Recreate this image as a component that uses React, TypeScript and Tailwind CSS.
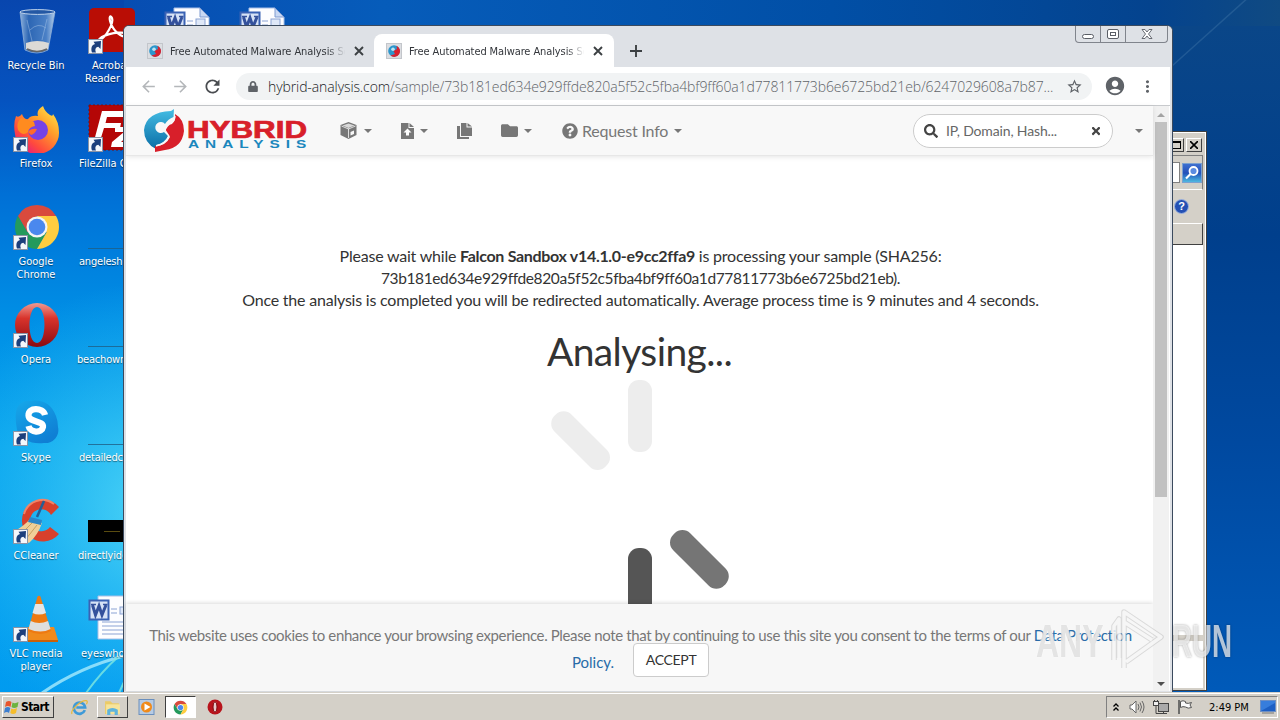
import React from 'react';
import { FaFolder, FaQuestionCircle, FaSearch, FaTimes, FaLock } from 'react-icons/fa';
import { MdArrowBack, MdArrowForward, MdRefresh, MdStarBorder, MdAccountCircle, MdMoreVert } from 'react-icons/md';

type IconProps = { className?: string };

function ShortcutArrow() {
  return (
    <svg viewBox="0 0 15 15" className="absolute bottom-0 left-0 h-[15px] w-[15px]">
      <rect x="0.5" y="0.5" width="14" height="14" fill="#f4f7fb" stroke="#8a94a6" />
      <path d="M4 13.500C2.500 9 4 5.800 7 5L5.500 2.800L13 2L12.500 10L10.300 7.800C8 8.300 6.500 10 8 13.500Z" fill="#1c3f7c" />
    </svg>
  );
}

function RecycleIcon() {
  return (
    <svg viewBox="0 0 48 48" className="h-12 w-12">
      <defs>
        <linearGradient id="bin" x1="0" x2="1">
          <stop offset="0" stopColor="#8fb2dc" />
          <stop offset="0.25" stopColor="#2c66b4" />
          <stop offset="0.75" stopColor="#4a80c6" />
          <stop offset="1" stopColor="#b4cdea" />
        </linearGradient>
      </defs>
      <path d="M7 6L12 44Q24 50 35 44L42 6Z" fill="url(#bin)" stroke="#8fb0d8" strokeWidth=".8" />
      <path d="M13 37Q24 33 36 37L35 43Q24 48 13 43Z" fill="#dcdad6" />
      <path d="M14 43Q24 48 34 43" stroke="#666" fill="none" strokeWidth="1.500" />
      <ellipse cx="24.500" cy="6" rx="17.500" ry="2.400" fill="#2458a4" stroke="#c0d4ec" />
      <path d="M14 14L19 35M34 13L29 34M17 24Q25 16 33 22" stroke="#a4c2e6" fill="none" opacity=".5" />
    </svg>
  );
}

function FirefoxIcon() {
  return (
    <svg viewBox="0 0 48 48" className="h-12 w-12">
      <defs>
        <linearGradient id="fx" x1="1" y1="0" x2="0.2" y2="1">
          <stop offset="0" stopColor="#fff44f" />
          <stop offset="0.4" stopColor="#ffa02a" />
          <stop offset="0.75" stopColor="#ff4a3d" />
          <stop offset="1" stopColor="#e31587" />
        </linearGradient>
      </defs>
      <path d="M3 11Q6 13 9 9Q11 15 15 14Q18 10 25 11Q23 5 30 1Q32 7 37 10Q40 12 40 9Q46 17 46 27A22 21 0 0 1 2 29Q0 19 3 11Z" fill="url(#fx)" />
      <circle cx="25" cy="25" r="10" fill="#7542e5" />
      <path d="M8 13L21 17L22 21Q16 22 15 27Q10 32 5 25Q3 18 8 13Z" fill="#ff8b1f" />
      <path d="M15 27Q18 23 24 24Q22 29 18 30Z" fill="#ff6a2b" />
    </svg>
  );
}

function ChromeIcon({ className }: IconProps) {
  return (
    <svg viewBox="0 0 48 48" className={className}>
      <path d="M24 2A22 22 0 0 1 43.050 13H24L14.500 29.500L4.950 13A22 22 0 0 1 24 2Z" fill="#d94a3d" />
      <path d="M4.950 13A22 22 0 0 0 24 46L33.500 29.500H14.500Z" fill="#249a5c" />
      <path d="M43.050 13A22 22 0 0 1 24 46L33.500 29.500L24 13Z" fill="#ffcd40" />
      <circle cx="24" cy="24" r="10.500" fill="#f4f4f4" />
      <circle cx="24" cy="24" r="8.300" fill="#4a88ee" />
    </svg>
  );
}

function OperaIcon({ className }: IconProps) {
  return (
    <svg viewBox="0 0 48 48" className={className}>
      <defs>
        <linearGradient id="op" x1="0" y1="0" x2="0" y2="1">
          <stop offset="0" stopColor="#ee9a92" />
          <stop offset="0.35" stopColor="#d8332b" />
          <stop offset="1" stopColor="#8c0a10" />
        </linearGradient>
      </defs>
      <path fillRule="evenodd" d="M24 2A22 22 0 0 1 24 46A22 22 0 0 1 24 2ZM24 6C14 6 14 42 24 42C34 42 34 6 24 6Z" fill="url(#op)" />
    </svg>
  );
}

function SkypeIcon() {
  return (
    <svg viewBox="0 0 48 48" className="h-12 w-12">
      <defs>
        <linearGradient id="sk" x1="0" y1="0" x2="0.6" y2="1">
          <stop offset="0" stopColor="#16a8ea" />
          <stop offset="1" stopColor="#0f7fd4" />
        </linearGradient>
      </defs>
      <path d="M3 14A12 12 0 0 1 17 2Q36 -1 43 17Q45 22 45 28A13 13 0 0 1 31 44Q11 46 4 31Q2 20 3 14Z" fill="url(#sk)" />
      <path d="M32 16C30 8 15 8 15.500 16.500C16 24 31 21 30 28C29 34.500 17 34 15.500 27" fill="none" stroke="#fff" strokeWidth="6.200" />
    </svg>
  );
}

function CCleanerIcon() {
  return (
    <svg viewBox="0 0 48 48" className="h-12 w-12">
      <path d="M46 10A21 21 0 1 0 46 37L37 30A11 11 0 1 1 38 18Z" fill="#d8402c" />
      <path d="M41 7A19 19 0 0 0 11 17" fill="none" stroke="#f08468" strokeWidth="2" />
      <path d="M2 34Q12 28 17 22L29 26Q25 38 16 46Q8 42 2 34Z" fill="#f0cf98" />
      <path d="M7 38L19 26M13 42L24 28" stroke="#caa05e" />
      <path d="M17 20L29 23L28 28L15 25Z" fill="#2c86c8" />
      <path d="M24 20L31 4" stroke="#245f96" strokeWidth="2.500" />
    </svg>
  );
}

function VlcIcon() {
  return (
    <svg viewBox="0 0 48 48" className="h-12 w-12">
      <path d="M11 32H39L43 45V47H10Z" fill="#f08a1c" />
      <path d="M10 45H43V47H10Z" fill="#c96008" />
      <path d="M22.500 1.500Q24 0 25.500 1.500L36 36Q26 42 13 36Z" fill="#ee7a12" />
      <path d="M20.200 9H28.200L31 18Q24 21 17.500 18Z" fill="#e6e6e6" />
      <path d="M15.700 26Q24 30 33 26L35.500 34Q26 39 13.500 34Z" fill="#dedede" />
    </svg>
  );
}

function AcrobatIcon() {
  return (
    <svg viewBox="0 0 48 48" className="h-12 w-12">
      <rect x="1" y="3" width="46" height="44" rx="5" fill="#b90d05" />
      <path d="M12 35C18 32 26 18 24 13C22 9 20 13 24 21C28 29 37 34 39 30C40 26 23 27 14 32C10 35 9 37 12 35Z" fill="none" stroke="#fff" strokeWidth="2.200" />
    </svg>
  );
}

function FileZillaIcon() {
  return (
    <svg viewBox="0 0 48 48" className="h-12 w-12">
      <rect x="1" y="2" width="46" height="45" fill="#b40606" stroke="#7a1010" strokeDasharray="2 2" />
      <path d="M14 8H38L36 14H19L17.500 20H33L32 25H16L12 38H6ZM27 24H46L44 29L33 39H46V44H23L24 39L36 29H27Z" fill="#fff" />
    </svg>
  );
}

function WordIcon() {
  return (
    <svg viewBox="0 0 48 48" className="h-12 w-12">
      <path d="M10 3H36L45 12V46H10Z" fill="#fdfdff" stroke="#a9bfe6" />
      <path d="M36 3V12H45Z" fill="#c9d8f3" stroke="#7f9bd1" />
      <path d="M23 16H29M23 20H29M14 29H41M14 33H41M14 37H41M14 41H41" stroke="#8ba3d4" />
      <rect x="32" y="14" width="9" height="7" fill="#dfe8f8" stroke="#8ba3d4" />
      <rect x="1.500" y="7.500" width="19" height="19" fill="#d6e2f6" stroke="#3a62b4" strokeWidth="2" />
      <path d="M4.500 12L7.500 22L11 13L14 22L18 12" fill="none" stroke="#34519c" strokeWidth="3" />
      <path d="M3 11.500H8M15 11.500H19.500" stroke="#34519c" strokeWidth="1.500" />
    </svg>
  );
}

function ThumbLine() {
  return <div className="pt-[47px]"><div className="h-px w-12 bg-[#1f5f86]/80" /></div>;
}

function BlackThumb() {
  return (
    <div className="flex h-[22px] w-12 items-center justify-center bg-black">
      <div className="h-px w-4 bg-[#5a4c10]" />
    </div>
  );
}

function Column1Item({ icon, label, shortcut = true }: { icon: React.ReactNode; label: string[]; shortcut?: boolean }) {
  return (
    <div className="flex h-[98px] flex-col items-center">
      <div className="relative h-[49px] w-12">
        <div className={shortcut ? 'pl-px pt-[2px]' : 'pt-px pl-px'}>{icon}</div>
        {shortcut && <div className="absolute bottom-0 left-[1px] h-[15px] w-[15px]"><ShortcutArrow /></div>}
      </div>
      <div className="mt-[5px] text-center">
        {label.map((l) => <div key={l}>{l}</div>)}
      </div>
    </div>
  );
}

function Column2Item({ icon, label, shortcut = false }: { icon: React.ReactNode; label: React.ReactNode; shortcut?: boolean }) {
  return (
    <div className="h-[98px] w-[60px]">
      <div className="relative ml-[12px] h-[49px] w-12">
        {icon}
        {shortcut && <ShortcutArrow />}
      </div>
      <div className="mt-[5px] whitespace-nowrap">{label}</div>
    </div>
  );
}

function Wallpaper() {
  return (
    <svg viewBox="0 0 1280 720" className="absolute inset-0 h-[720px] w-[1280px]">
      <defs>
        <linearGradient id="wTop" x1="0" x2="1">
          <stop offset="0" stopColor="#0846ae" />
          <stop offset="0.3" stopColor="#065cba" />
          <stop offset="0.65" stopColor="#014fa6" />
          <stop offset="0.9" stopColor="#04438e" />
          <stop offset="1" stopColor="#104a82" />
        </linearGradient>
        <linearGradient id="wLeft" x1="0" x2="0" y1="0" y2="1">
          <stop offset="0" stopColor="#0846ae" />
          <stop offset="0.14" stopColor="#0553c0" />
          <stop offset="0.27" stopColor="#0070d6" />
          <stop offset="0.45" stopColor="#0090e6" />
          <stop offset="0.62" stopColor="#06a4ee" />
          <stop offset="1" stopColor="#009af0" />
        </linearGradient>
        <radialGradient id="wGlow" gradientUnits="userSpaceOnUse" cx="160" cy="510" r="230">
          <stop offset="0" stopColor="#58dcf8" stopOpacity=".9" />
          <stop offset="1" stopColor="#30c0f4" stopOpacity="0" />
        </radialGradient>
        <linearGradient id="wRight" x1="0" x2="0" y1="0" y2="1">
          <stop offset="0" stopColor="#0a4688" />
          <stop offset="0.3" stopColor="#003f8c" />
          <stop offset="0.6" stopColor="#0049a0" />
          <stop offset="1" stopColor="#005cbc" />
        </linearGradient>
      </defs>
      <rect width="1280" height="720" fill="url(#wTop)" />
      <rect width="124" height="720" fill="url(#wLeft)" />
      <rect width="124" height="720" fill="url(#wGlow)" />
      <rect x="1165" y="26" width="115" height="694" fill="url(#wRight)" />
      <path d="M1250 -4L1172 66" stroke="#4b7fae" strokeWidth="1.500" opacity=".35" />
      <path d="M42 693Q80 667 124 656" stroke="#a8ebfc" strokeWidth="3" fill="none" opacity=".8" />
      <path d="M86 693Q102 671 118 657M119 693L124 682" stroke="#7fe9e0" strokeWidth="2" fill="none" opacity=".8" />
    </svg>
  );
}

function BackWindow() {
  return (
    <div className="absolute left-[1099px] top-[131px] flex h-[560px] w-[108px] flex-col border border-[#404040] bg-[#d4d0c8] pb-[2px] pr-[3px] shadow-[inset_-1px_1px_0_#fff]">
      <div className="flex h-[23px] items-center justify-end gap-[2px] pr-[1px] pt-[3px]">
        <div className="flex h-[14px] w-4 items-center justify-center border border-t-white border-r-[#404040] border-b-[#404040] border-l-white">
          <div className="h-2 w-[9px] border border-t-2 border-black" />
        </div>
        <div className="flex h-[14px] w-4 items-center justify-center border border-t-white border-r-[#404040] border-b-[#404040] border-l-white">
          <svg viewBox="0 0 8 8" className="h-2 w-2"><path d="M0 0L8 8M8 0L0 8" stroke="#000" strokeWidth="1.600" /></svg>
        </div>
      </div>
      <div className="flex h-[35px] items-center justify-end border-y border-r border-t-[#808080] border-r-[#808080] border-b-white">
        <div className="h-[21px] w-20 border border-[#808080] bg-white" />
        <div className="ml-[2px] flex h-[20px] w-[20px] items-center justify-center border border-[#7ba0d0] bg-linear-to-b from-[#3e6fd0] via-[#2450b8] to-[#50b8e0]">
          <svg viewBox="0 0 16 16" className="h-4 w-4"><circle cx="9.500" cy="6" r="4" fill="#5b8be0" stroke="#fff" strokeWidth="1.800" /><path d="M6.500 9L2 13.500" stroke="#fff" strokeWidth="2.200" /></svg>
        </div>
      </div>
      <div className="flex h-[33px] items-center justify-end pr-[14px]">
        <div className="flex h-[15px] w-[15px] items-center justify-center rounded-full border border-[#9fb4de] bg-[#2450b4] font-['Liberation_Sans'] text-[11px] font-bold leading-none text-white">?</div>
      </div>
      <div className="h-[22px] border-b border-r border-t border-t-white border-r-[#404040] border-b-[#404040]" />
      <div className="h-[390px] bg-white" />
      <div className="h-[6px] bg-[#d4d0c8]" />
      <div className="grow bg-white" />
    </div>
  );
}

function Favicon() {
  return (
    <svg viewBox="0 0 16 16" className="h-4 w-4 shrink-0">
      <rect x="0.500" y="0.500" width="15" height="15" fill="#dcdee2" stroke="#c3c6cb" />
      <circle cx="8" cy="8" r="5.800" fill="#2b96cc" />
      <path d="M10.500 2.800A5.800 5.800 0 1 1 4.500 12.600L9 11L7.500 8L11 6Z" fill="#d9202e" />
      <circle cx="7" cy="6.300" r="1.800" fill="#bfe3f2" />
    </svg>
  );
}

function TabTitle() {
  return (
    <div className="ml-[7px] w-[177px] overflow-hidden whitespace-nowrap pt-px text-[11px] tracking-[-0.1px] text-[#33363b] [mask-image:linear-gradient(to_right,#000_89%,transparent_99%)]">
      Free Automated Malware Analysis Service
    </div>
  );
}

function CloseTab() {
  return <svg viewBox="0 0 14 14" className="ml-[5px] h-[14px] w-[14px]"><path d="M3 3L11 11M11 3L3 11" stroke="#3c4043" strokeWidth="1.900" /></svg>;
}

function TabStrip() {
  return (
    <div className="flex h-[41px] bg-[#dee1e6] pl-[3px]">
      <div className="mt-[8px] flex h-[33px] w-[247px] items-center pl-[20px]">
        <Favicon />
        <TabTitle />
        <CloseTab />
      </div>
      <div className="mt-[8px] flex h-[33px] w-[240px] items-center rounded-t-lg bg-white pl-[12px]">
        <Favicon />
        <TabTitle />
        <CloseTab />
      </div>
      <div className="mt-[8px] flex h-[33px] items-center pl-[13px]">
        <svg viewBox="0 0 18 18" className="h-[18px] w-[18px]"><path d="M3 9H15M9 3V15" stroke="#3c4043" strokeWidth="1.900" /></svg>
      </div>
      <div className="ml-auto mr-[4px] flex h-[17px] w-[93px] rounded-b border border-t-0 border-[#80848c] text-[#5a5e66]">
        <div className="flex w-[25px] items-center justify-center border-r border-[#80848c]"><div className="mt-[5px] h-[5px] w-[12px] rounded-sm border border-current bg-white" /></div>
        <div className="flex w-[25px] items-center justify-center border-r border-[#80848c]">
          <div className="flex h-[10px] w-[12px] items-center justify-center rounded-xs border border-current bg-white"><div className="h-[4px] w-[6px] border border-current" /></div>
        </div>
        <div className="flex grow items-center justify-center">
          <svg viewBox="0 0 12 10" className="h-[10px] w-3"><path d="M1 .5H4L6 3L8 .5H11L7.500 5L11 9.500H8L6 7L4 9.500H1L4.500 5Z" fill="#fff" stroke="currentColor" strokeWidth=".9" /></svg>
        </div>
      </div>
    </div>
  );
}

function Toolbar() {
  return (
    <div className="mx-[2px] flex h-[38px] items-center bg-white pl-[13px]">
      <MdArrowBack className="h-[19px] w-[19px] text-[#b4b7ba]" />
      <MdArrowForward className="ml-[13px] h-[19px] w-[19px] text-[#b4b7ba]" />
      <MdRefresh className="ml-[12px] h-[21px] w-[21px] text-[#4a4d51]" />
      <div className="ml-[13px] flex h-[27px] w-[856px] items-center rounded-full bg-[#f1f3f4] pl-[12px]">
        <FaLock className="h-[11px] w-[10px] shrink-0 text-[#5f6368]" />
        <div className="ml-[10px] w-[786px] whitespace-nowrap font-['Open_Sans'] text-[14px] font-light tracking-[-0.11px] text-[#5f6368]">
          <span className="tracking-[-0.1px] text-[#202124]">hybrid-analysis.com</span>/sample/73b181ed634e929ffde820a5f52c5fba4bf9ff60a1d77811773b6e6725bd21eb/6247029608a7b87...
        </div>
        <MdStarBorder className="ml-[12px] h-[17px] w-[17px] text-[#5f6368]" />
      </div>
      <MdAccountCircle className="ml-[12px] h-[22px] w-[22px] text-[#5f6368]" />
      <MdMoreVert className="ml-[12px] h-[19px] w-[19px] text-[#5f6368]" />
    </div>
  );
}

function HybridLogo() {
  return (
    <svg viewBox="0 0 164 46" className="h-[46px] w-[164px]">
      <defs>
        <linearGradient id="lg" x1="0" y1="0" x2="0" y2="1"><stop offset="0" stopColor="#45bde4" /><stop offset="1" stopColor="#0a6ea6" /></linearGradient>
      </defs>
      <path d="M30 1L29.500 9Q24 11 21 16A5.500 5.500 0 1 0 20 24L24 28Q21 35 12 37V41Q0 35 0 22Q2 4 27 3Z" fill="url(#lg)" />
      <path d="M31 6Q40 11 40 23Q38 40 21 42L11 44V38Q22 38 26 29L21.500 23.500Q23 17 28 16Q32 12 31 6Z" fill="#d81f2a" />
      <path d="M31 8Q31 13 27 15Q22 17 21 22L25 28Q22 36 12 38" fill="none" stroke="#f8f8f8" strokeWidth="1.300" />
      <text x="43" y="30" textLength="120" lengthAdjust="spacingAndGlyphs" fontFamily="Liberation Sans" fontWeight="bold" fontSize="23" fill="#d81f2a" stroke="#d81f2a" strokeWidth=".7">HYBRID</text>
      <g transform="translate(44 40) scale(1.4 1)">
        <text textLength="84.500" fontFamily="Liberation Sans" fontWeight="bold" fontSize="11" fill="#1b87bd">ANALYSIS</text>
      </g>
    </svg>
  );
}

function Caret({ className }: IconProps) {
  return <svg viewBox="0 0 8 4" className={'h-1 w-2 ' + (className ?? '')}><path d="M0 0H8L4 4Z" fill="#777" /></svg>;
}

function SiteHeader() {
  return (
    <div className="relative z-10 flex h-[50px] shrink-0 items-center border-b border-[#e7e7e7] bg-[#f8f8f8] pl-[18px] text-[#777] shadow-[0_1px_5px_#0000001a]">
      <HybridLogo />
      <svg viewBox="0 0 16 17" className="ml-[32px] h-[17px] w-[17px] shrink-0">
        <path d="M8 0L16 3V13L8 17L0 13V3Z" fill="#777" />
        <path d="M2 3.500L8 1.500L14 3.500L8 6Z" fill="#f8f8f8" opacity=".75" />
        <path d="M8 6.500V16M1 4L8 7L15 4" stroke="#f8f8f8" strokeWidth=".8" fill="none" />
        <path d="M10 10L13.500 8.500V12L10 13.500Z" fill="#f8f8f8" />
      </svg>
      <Caret className="ml-[7px]" />
      <svg viewBox="0 0 13 16" className="ml-[29px] h-[16px] w-[13px]">
        <path d="M0 0H7.500V5H13V16H0Z" fill="#777" /><path d="M8.500 0L13 4H8.500Z" fill="#777" />
        <path d="M6.500 5.500L10.500 9.500H8V12.500H5V9.500H2.500Z" fill="#fff" />
      </svg>
      <Caret className="ml-[6px]" />
      <svg viewBox="0 0 15 16" className="ml-[29px] h-[16px] w-[15px]">
        <path d="M4 0H9.500V4.500H15V13H4ZM10.500 0L15 3.500H10.500Z" fill="#777" />
        <path d="M0 3H3V14H12V16H0Z" fill="#777" />
      </svg>
      <FaFolder className="ml-[29px] h-[17px] w-[17px]" />
      <Caret className="ml-[6px]" />
      <FaQuestionCircle className="ml-[30px] h-[16px] w-[16px]" />
      <span className="ml-[4px] font-['Lato'] text-[16px] tracking-[-0.2px]">Request Info</span>
      <Caret className="ml-[6px]" />
      <div className="ml-auto flex h-[34px] w-[200px] items-center rounded-full border border-[#ccc] bg-white pl-[10px] font-['Lato'] text-[14px]">
        <FaSearch className="h-[14px] w-[14px] text-[#444]" />
        <span className="ml-[8px] tracking-[-0.15px] text-[#666]">IP, Domain, Hash...</span>
        <FaTimes className="ml-auto mr-[10px] h-[12px] w-[12px] text-[#444]" />
      </div>
      <Caret className="ml-[22px] mr-[10px]" />
    </div>
  );
}

function Spinner() {
  return (
    <svg viewBox="0 0 240 240" className="h-[240px] w-[240px] shrink-0">
      <rect x="108" y="0" width="24" height="72" rx="11" fill="#ededed" />
      <rect x="108" y="0" width="24" height="72" rx="11" fill="#ededed" transform="rotate(-45 120 120)" />
      <rect x="108" y="0" width="24" height="72" rx="11" fill="#757575" transform="rotate(135 120 120)" />
      <rect x="108" y="168" width="24" height="72" rx="11" fill="#555" />
    </svg>
  );
}

function Page() {
  return (
    <div className="mx-[2px] flex h-[586px] border-t border-[#c8cacd] bg-white">
      <div className="flex w-[1027px] flex-col font-['Lato'] text-[#333]">
        <SiteHeader />
        <div className="flex h-[448px] shrink-0 flex-col items-center overflow-hidden pl-[2px] pt-[89px] text-[16px] leading-[22px] whitespace-nowrap">
          <div className="tracking-[-0.21px]">Please wait while <b className="tracking-[-0.31px]">Falcon Sandbox v14.1.0-e9cc2ffa9</b> is processing your sample (SHA256:</div>
          <div className="text-[15.5px] tracking-[-0.39px]">73b181ed634e929ffde820a5f52c5fba4bf9ff60a1d77811773b6e6725bd21eb).</div>
          <div className="tracking-[-0.21px]">Once the analysis is completed you will be redirected automatically. Average process time is 9 minutes and 4 seconds.</div>
          <div className="mt-[17px] h-[52px] shrink-0 pr-[2px] text-[39px] leading-[46px] tracking-[-0.6px]">Analysing...</div>
          <div className="shrink-0 pr-px"><Spinner /></div>
        </div>
        <div className="flex grow flex-col items-center whitespace-nowrap bg-[#f7f7f7] pl-[2px] pt-[21px] text-[15px] text-[#777] shadow-[0_-1px_4px_#00000026]">
          <div className="h-[18px] leading-[20px] tracking-[-0.38px]">This website uses cookies to enhance your browsing experience. Please note that by continuing to use this site you consent to the terms of our <span className="text-[#286ba8]">Data Protection</span></div>
          <div className="flex items-center gap-[19px]">
            <span className="pt-[4px] text-[#286ba8]">Policy.</span>
            <div className="flex h-[34px] w-[76px] items-center justify-center rounded border border-[#ccc] bg-white pb-[2px] text-[14px] tracking-[-0.3px] text-[#333]">ACCEPT</div>
          </div>
        </div>
      </div>
      <div className="flex w-[16px] flex-col items-center bg-[#f1f1f1]">
        <svg viewBox="0 0 8 4" className="mt-[7px] h-1 w-2"><path d="M0 4H8L4 0Z" fill="#a3a3a3" /></svg>
        <div className="mt-[5px] h-[375px] w-[12px] bg-[#c1c1c1]" />
        <svg viewBox="0 0 8 4" className="mb-[5px] mt-auto h-1 w-2"><path d="M0 0H8L4 4Z" fill="#505050" /></svg>
      </div>
    </div>
  );
}

function ChromeWindow() {
  return (
    <div className="absolute left-[123px] top-[25px] flex h-[668px] w-[1050px] flex-col overflow-hidden rounded-t-md border border-[#3b4a5e] bg-[#dee1e6]">
      <TabStrip />
      <Toolbar />
      <Page />
    </div>
  );
}

function Watermark() {
  return (
    <div className="absolute left-[1036px] top-[608px] flex h-[64px] w-[196px] items-center justify-between font-['Liberation_Sans_Narrow','Liberation_Sans'] text-[47px] font-bold leading-none">
      <span className="w-[66px] origin-left scale-x-[0.68] text-[#c4c4c4]/45 [text-shadow:0_0_2px_#ffffff]">ANY</span>
      <svg viewBox="0 0 58 64" className="h-16 w-[58px] shrink-0" fill="none" strokeLinejoin="round">
        <path d="M16 60V4L53 29L18 54M16 14L44 32M6 52V18L11 11V50" stroke="#b0b0b0" strokeOpacity=".4" strokeWidth="5.500" />
        <path d="M16 60V4L53 29L18 54M16 14L44 32M6 52V18L11 11V50" stroke="#fff" strokeOpacity=".75" strokeWidth="3.500" />
      </svg>
      <span className="w-[60px] origin-left scale-x-[0.59] text-white/70 [text-shadow:0_0_3px_#00000060]">RUN</span>
    </div>
  );
}

function WindowsFlag() {
  return (
    <svg viewBox="0 0 16 16" className="h-4 w-4">
      <path d="M2 3Q5 1 7.500 3L6.500 8Q4 6 1 8Z" fill="#e8552d" />
      <path d="M8.500 3.500Q11 5 14.500 3L13.500 8Q10 10 7.500 8Z" fill="#6db33f" />
      <path d="M1 9Q4 7 6.300 9L5 14Q3 12 0 14Z" fill="#3d7fd0" />
      <path d="M7.300 9.500Q10 11 13 9L12 14Q9 16 6.300 14Z" fill="#f5bd2b" />
    </svg>
  );
}

function Taskbar() {
  return (
    <div className="absolute inset-x-0 bottom-0 flex h-[28px] items-center border-t border-[#d4d0c8] bg-[#d4d0c8] pt-px shadow-[inset_0_1px_0_#fff]">
      <div className="ml-[2px] flex h-[22px] w-[52px] items-center border border-t-white border-r-[#404040] border-b-[#404040] border-l-white pl-px font-['DejaVu_Sans_Condensed'] text-[12px] font-bold text-black">
        <WindowsFlag /><span className="ml-px tracking-[-0.6px]">Start</span>
      </div>
      <svg viewBox="0 0 16 16" className="ml-[17px] h-[17px] w-[17px]">
        <path d="M13 10.500A5.300 5.300 0 1 1 13.300 8H5" fill="none" stroke="#3e9ad8" strokeWidth="2.500" />
        <path d="M1 14C-1 11 9 1 14.500 1.500C16 2 15 4 14.500 5" fill="none" stroke="#e7b93d" strokeWidth="1.200" />
      </svg>
      <div className="ml-[9px] flex h-[22px] w-[31px] items-center justify-center border border-t-white border-r-[#404040] border-b-[#404040] border-l-white">
        <svg viewBox="0 0 16 16" className="h-[17px] w-[17px]">
          <path d="M1 2H6L8 4H14V14H1Z" fill="#eccb66" /><path d="M2 5H15V14H2Z" fill="#f7e49b" />
          <path d="M3 14V10Q8 7 13 10V15H10V12H6V15H3Z" fill="#5fb4dc" />
        </svg>
      </div>
      <svg viewBox="0 0 16 16" className="ml-[10px] h-[16px] w-[17px]">
        <rect x="0.500" y="0.500" width="15" height="15" fill="#b6cbe4" stroke="#6a8fbd" />
        <circle cx="8" cy="8" r="5.500" fill="#f08a1a" /><path d="M6 4.500L12 8L6 11.500Z" fill="#fff" />
      </svg>
      <div className="ml-[10px] flex h-[22px] w-[31px] items-center justify-center border border-t-[#404040] border-r-white border-b-white border-l-[#404040] bg-white">
        <ChromeIcon className="h-[15px] w-[15px]" />
      </div>
      <svg viewBox="0 0 16 16" className="ml-[11px] h-4 w-4">
        <circle cx="8" cy="8" r="7.500" fill="#b8141c" /><ellipse cx="8" cy="8" rx="2" ry="5.200" fill="#e8c8c8" stroke="#7c0a10" />
      </svg>
      <div className="ml-auto mr-[2px] flex h-[22px] w-[172px] items-center border border-t-[#808080] border-r-white border-b-white border-l-[#808080] pl-[6px]">
        <svg viewBox="0 0 6 8" className="h-2 w-[6px]"><path d="M.5 3.500L3 1L5.500 3.500M.5 7.500L3 5L5.500 7.500" fill="none" stroke="#000" strokeWidth="1.300" /></svg>
        <svg viewBox="0 0 16 16" className="ml-[10px] h-4 w-4" fill="none" stroke="#666"><path d="M1 6H3L7 2V14L3 10H1Z" fill="#fff" /><path d="M9 5Q11 8 9 11M11 3.500Q14 8 11 12.500M13 2Q17 8 13 14" /></svg>
        <svg viewBox="0 0 16 16" className="ml-[8px] h-4 w-4" stroke="#444"><rect x="5.500" y="4.500" width="10" height="8" fill="#aaa" /><path d="M7 14.500H14M10.500 12.500V14.500M3 7V14.500H7M1.500 1V3M4.500 1V3" fill="none" /><rect x=".5" y="2.500" width="5" height="4" fill="#eee" /></svg>
        <svg viewBox="0 0 16 16" className="ml-[8px] h-4 w-4" stroke="#555"><path d="M3.500 2.500Q6 1 8.500 2.500V4Q11 5 14.500 3.500L13 6L14.500 8.500Q11 10 8.500 8Q6 7 3.500 8.500Z" fill="#fafafa" /><path d="M2 1V15" strokeWidth="1.600" /></svg>
        <span className="ml-[16px] whitespace-nowrap font-['DejaVu_Sans_Condensed'] text-[11px] text-black">2:49 PM</span>
        <svg viewBox="0 0 16 14" className="ml-auto mr-px h-[14px] w-4"><rect x=".5" y=".5" width="15" height="11" fill="#1d5fc4" stroke="#6d8fc4" /><path d="M1 11L8 7L15 3V1H1Z" fill="#377ddc" /><path d="M2 13H14" stroke="#777" /></svg>
      </div>
    </div>
  );
}

export default function App() {
  return (
    <div className="relative h-[720px] w-[1280px] overflow-hidden font-['DejaVu_Sans_Condensed','DejaVu_Sans',sans-serif] text-[11px] leading-[13px]">
      <Wallpaper />
      <div className="absolute left-0 top-[5px] w-[72px] text-white [text-shadow:0_1px_1px_#00000080]">
        <Column1Item icon={<RecycleIcon />} label={['Recycle Bin']} shortcut={false} />
        <Column1Item icon={<FirefoxIcon />} label={['Firefox']} />
        <Column1Item icon={<ChromeIcon className="h-12 w-12" />} label={['Google', 'Chrome']} />
        <Column1Item icon={<OperaIcon className="h-12 w-12" />} label={['Opera']} />
        <Column1Item icon={<SkypeIcon />} label={['Skype']} />
        <Column1Item icon={<CCleanerIcon />} label={['CCleaner']} />
        <Column1Item icon={<div className="pl-[2px]"><VlcIcon /></div>} label={['VLC media', 'player']} />
      </div>
      <div className="absolute left-[76px] top-[5px] text-white [text-shadow:0_1px_1px_#00000080]">
        <Column2Item icon={<AcrobatIcon />} shortcut label={<><div className="pl-[16px]">Acrobat</div><div className="pl-[9px]">Reader DC</div></>} />
        <Column2Item icon={<FileZillaIcon />} shortcut label={<div className="pl-[3px]">FileZilla Client</div>} />
        <Column2Item icon={<ThumbLine />} label={<div className="pl-[3px] tracking-[-0.2px]">angeleshu</div>} />
        <Column2Item icon={<ThumbLine />} label={<div className="pl-px tracking-[-0.2px]">beachown</div>} />
        <Column2Item icon={<ThumbLine />} label={<div className="pl-[3px] tracking-[-0.2px]">detailedch</div>} />
        <Column2Item icon={<div className="pt-[25px]"><BlackThumb /></div>} label={<div className="pl-[2px] tracking-[-0.2px]">directlyide</div>} />
        <Column2Item icon={<WordIcon />} label={<div className="pl-[5px]">eyeswho</div>} />
      </div>
      <div className="absolute left-[164px] top-[5px] flex gap-[27px]">
        <WordIcon />
        <WordIcon />
      </div>
      <BackWindow />
      <ChromeWindow />
      <Taskbar />
      <Watermark />
    </div>
  );
}
